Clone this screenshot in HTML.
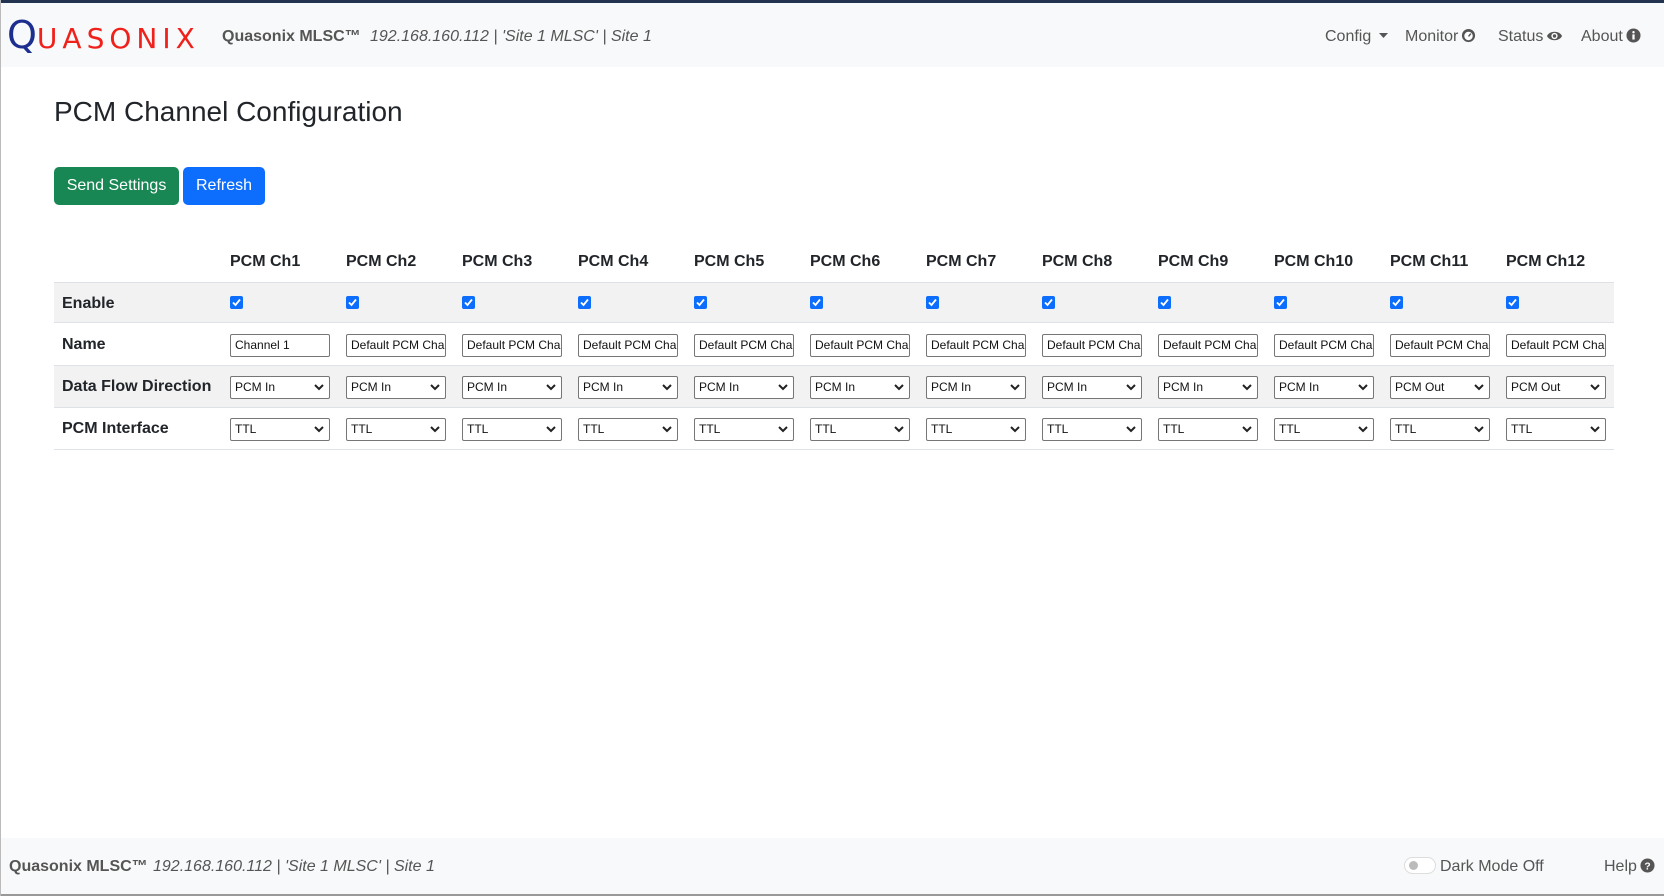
<!DOCTYPE html>
<html><head><meta charset="utf-8"><style>
*{box-sizing:border-box;margin:0;padding:0}
body{width:1664px;height:896px;overflow:hidden;background:#fff;font-family:"Liberation Sans",sans-serif;color:#212529;position:relative;border-left:1px solid #bbb}
.top{position:absolute;left:0;top:0;width:1664px;height:3px;background:#22344f}
.nav{position:absolute;left:0;top:3px;width:1664px;height:64px;background:#f8f9fa}
.logo{position:absolute;left:6px;top:12px;line-height:40px;font-family:"DejaVu Sans",sans-serif;white-space:nowrap}
.logo .q{color:#1c2f8f;font-size:38px}
.logo .r{color:#f0201a;font-size:28px;letter-spacing:5px}
.brand{position:absolute;left:221px;top:25px;font-size:16px;font-weight:bold;color:#555}
.addr{position:absolute;left:369px;top:25px;font-size:16px;font-style:italic;color:#555}
.links{position:absolute;top:25px;font-size:16px;color:#555;white-space:nowrap}
.links svg{vertical-align:-2px;margin-left:3px}
h1{position:absolute;left:53px;top:96px;font-size:28px;font-weight:normal;color:#212529}
.btn{position:absolute;top:167px;height:38px;border-radius:5px;color:#fff;font-size:16px;line-height:38px;text-align:center}
.row{position:absolute;left:53px;width:1560px;border-bottom:1px solid #dee2e6}
.lbl{position:absolute;left:8px;font-weight:bold;font-size:16px}
.hd{position:absolute;font-weight:bold;font-size:16px;top:253px}
.cb{position:absolute;width:13px;height:13px;background:#0d6efd;border-radius:2px}
.cb svg{position:absolute;left:1px;top:1px}
.inp{position:absolute;width:100px;height:23px;border:1px solid #767676;border-radius:2px;background:#fff;font-size:12px;line-height:21px;padding-left:4px;white-space:nowrap;overflow:hidden;color:#111}
.inp svg{position:absolute;right:5px;top:7px}
.foot{position:absolute;left:0;top:838px;width:1664px;height:58px;background:#f8f9fa;border-bottom:2px solid #999}
</style></head><body>
<div class="top"></div>
<div class="nav">
<div class="logo"><span class="q">Q</span><span class="r">UASONIX</span></div>
<div class="brand">Quasonix MLSC™</div>
<div class="addr">192.168.160.112 | 'Site 1 MLSC' | Site 1</div>
<div class="links" style="left:1324px">Config <svg width="9" height="6" viewBox="0 0 9 6" style="vertical-align:2px"><path d="M0 0H9L4.5 5Z" fill="#555"/></svg></div>
<div class="links" style="left:1404px">Monitor<svg width="15" height="15" viewBox="0 0 16 16"><circle cx="8" cy="8" r="7" fill="#555"/><circle cx="8" cy="8.5" r="4.5" fill="#fff"/><path d="M8 9L10.5 6" stroke="#555" stroke-width="1.5"/></svg></div>
<div class="links" style="left:1497px">Status<svg width="17" height="14" viewBox="0 0 18 14"><path d="M1 7C4 1 14 1 17 7C14 13 4 13 1 7Z" fill="#555"/><circle cx="9" cy="7" r="3.3" fill="#fff"/><circle cx="9" cy="7" r="1.8" fill="#555"/></svg></div>
<div class="links" style="left:1580px">About<svg width="15" height="15" viewBox="0 0 16 16"><circle cx="8" cy="8" r="7.5" fill="#555"/><circle cx="8" cy="4.5" r="1.3" fill="#fff"/><rect x="6.8" y="6.8" width="2.4" height="5.5" fill="#fff"/></svg></div>
</div>
<h1>PCM Channel Configuration</h1>
<div class="btn" style="left:53px;width:125px;background:#198754">Send Settings</div>
<div class="btn" style="left:182px;width:82px;background:#0d6efd">Refresh</div>

<div class="row" style="top:282px;height:41px;background:#f2f2f2;border-top:1px solid #dee2e6"><div class="lbl" style="top:12px">Enable</div></div>
<div class="row" style="top:323px;height:43px"><div class="lbl" style="top:13px">Name</div></div>
<div class="row" style="top:366px;height:42px;background:#f2f2f2"><div class="lbl" style="top:12px">Data Flow Direction</div></div>
<div class="row" style="top:408px;height:42px"><div class="lbl" style="top:12px">PCM Interface</div></div>

<div id="cols"></div>
<script>
var h='';var chev='<svg width="10" height="7" viewBox="0 0 10 7"><path d="M1 1L5 5L9 1" stroke="#222" stroke-width="2" fill="none"/></svg>';
for(var i=0;i<12;i++){var x=229+i*116;
h+='<div class="hd" style="left:'+x+'px">PCM Ch'+(i+1)+'</div>';
h+='<div class="cb" style="left:'+x+'px;top:296px"><svg width="11" height="11" viewBox="0 0 11 11"><path d="M2 5.5L4.5 8L9 2.5" stroke="#fff" stroke-width="1.8" fill="none"/></svg></div>';
h+='<div class="inp" style="left:'+x+'px;top:334px">'+(i==0?'Channel 1':'Default PCM Cha')+'</div>';
h+='<div class="inp" style="left:'+x+'px;top:376px">'+(i>=10?'PCM Out':'PCM In')+chev+'</div>';
h+='<div class="inp" style="left:'+x+'px;top:418px">TTL'+chev+'</div>';}
document.getElementById('cols').innerHTML=h;
</script>
<div class="foot">
<div style="position:absolute;left:8px;top:20px;font-size:16px;font-weight:bold;color:#555">Quasonix MLSC™</div>
<div style="position:absolute;left:152px;top:20px;font-size:16px;font-style:italic;color:#555">192.168.160.112 | 'Site 1 MLSC' | Site 1</div>
<div style="position:absolute;left:1403px;top:19px;width:32px;height:17px;border:1px solid #ddd;border-radius:9px;background:#fff"><div style="position:absolute;left:4px;top:3px;width:9px;height:9px;border-radius:50%;background:#bbb"></div></div>
<div style="position:absolute;left:1439px;top:20px;font-size:16px;color:#555">Dark Mode Off</div>
<div style="position:absolute;left:1603px;top:20px;font-size:16px;color:#555;white-space:nowrap">Help<svg width="15" height="15" viewBox="0 0 16 16" style="vertical-align:-2px;margin-left:3px"><circle cx="8" cy="8" r="7.5" fill="#555"/><text x="8" y="12" font-size="11" font-weight="bold" fill="#fff" text-anchor="middle" font-family="Liberation Sans">?</text></svg></div>
</div>
</body></html>
